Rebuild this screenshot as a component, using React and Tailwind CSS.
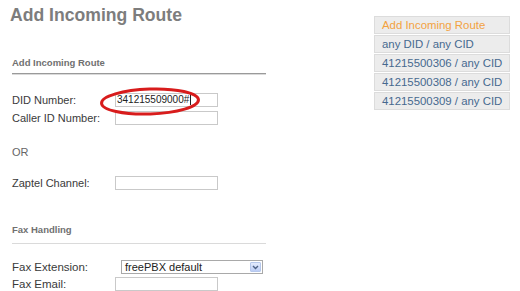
import React from "react";

function Field({ label, value, labelW = 103, inputW = 103, className = "", textSize = "text-[11px]" }) {
  return (
    <div className={`flex items-center h-[14px] ${className}`}>
      <div className={`${textSize} leading-[14px] text-[#3a3a3a] shrink-0`} style={{ width: labelW }}>
        {label}
      </div>
      <div
        className="h-[14px] border border-[#c9c9c9] bg-white flex items-center pl-px text-[10px] leading-[12px] text-[#222] shrink-0"
        style={{ width: inputW }}
      >
        {value}
      </div>
    </div>
  );
}

export default function App() {
  const side = [
    "Add Incoming Route",
    "any DID / any CID",
    "41215500306 / any CID",
    "41215500308 / any CID",
    "41215500309 / any CID",
  ];
  return (
    <div
      className="relative w-[520px] h-[291px] overflow-hidden bg-white flex"
      style={{ fontFamily: '"Liberation Sans", Arial, sans-serif' }}
    >
      <div className="w-[374px] shrink-0 pl-3 flex flex-col">
        <h1 className="mt-[4px] -ml-[2px] text-[17.6px] leading-[22px] font-bold text-[#7d7d7d]">
          Add Incoming Route
        </h1>
        <div className="mt-[31px] text-[9.5px] leading-[12px] font-bold text-[#707070]">
          Add Incoming Route
        </div>
        <div className="mt-[4px] w-[254px] h-px bg-[#9a9a9a]" />
        <div className="w-[254px] h-px bg-[#dadada]" />

        <Field
          className="mt-[18px]"
          label="DID Number:"
          value={
            <span className="flex items-center">
              341215509000#<span className="inline-block w-px h-[11px] bg-[#222] ml-px" />
            </span>
          }
        />
        <Field className="mt-[4px]" label="Caller ID Number:" value="" />

        <div className="mt-[20px] h-[14px] text-[11px] leading-[14px] text-[#666]">OR</div>

        <Field className="mt-[17px]" label="Zaptel Channel:" value="" />

        <div className="mt-[34px] text-[9.5px] leading-[12px] font-bold text-[#707070]">
          Fax Handling
        </div>
        <div className="mt-[7px] w-[254px] h-px bg-[#9a9a9a]" />
        <div className="w-[254px] h-px bg-[#dadada]" />

        <div className="mt-[16px] flex items-center h-[14px]">
          <div className="w-[109px] shrink-0 text-[11.5px] leading-[14px] text-[#3a3a3a]">Fax Extension:</div>
          <div className="w-[142px] h-[14px] border border-[#a9a9a9] bg-white flex items-center justify-between pl-[3px] pr-px">
            <span className="text-[11px] leading-[12px] text-[#222]">freePBX default</span>
            <span className="w-[11px] h-[10px] rounded-[1px] border border-[#b6c8ec] bg-gradient-to-b from-[#e3ebfd] to-[#bccdf5] flex items-center justify-center">
              <svg width="7" height="5" viewBox="0 0 7 5">
                <path d="M1 1 L3.5 3.5 L6 1" fill="none" stroke="#4d6185" strokeWidth="1.4" />
              </svg>
            </span>
          </div>
        </div>
        <Field className="mt-[3px]" label="Fax Email:" value="" textSize="text-[11.5px]" />
      </div>

      <div className="mt-[16px] w-[136px] shrink-0 flex flex-col gap-px">
        {side.map((s, i) => (
          <div
            key={s}
            className={`h-[18px] border border-[#dcdcdc] bg-[#ececec] px-[7px] text-[11.4px] leading-[16px] whitespace-nowrap ${
              i === 0 ? "text-[#f3a23f]" : "text-[#46698f]"
            }`}
          >
            {s}
          </div>
        ))}
      </div>

      <svg className="absolute left-0 top-0 pointer-events-none" width="520" height="291">
        <ellipse
          cx="150"
          cy="101.5"
          rx="48.5"
          ry="12.5"
          fill="none"
          stroke="#d81c1c"
          strokeWidth="3"
          transform="rotate(-2 150 101.5)"
        />
      </svg>
    </div>
  );
}
